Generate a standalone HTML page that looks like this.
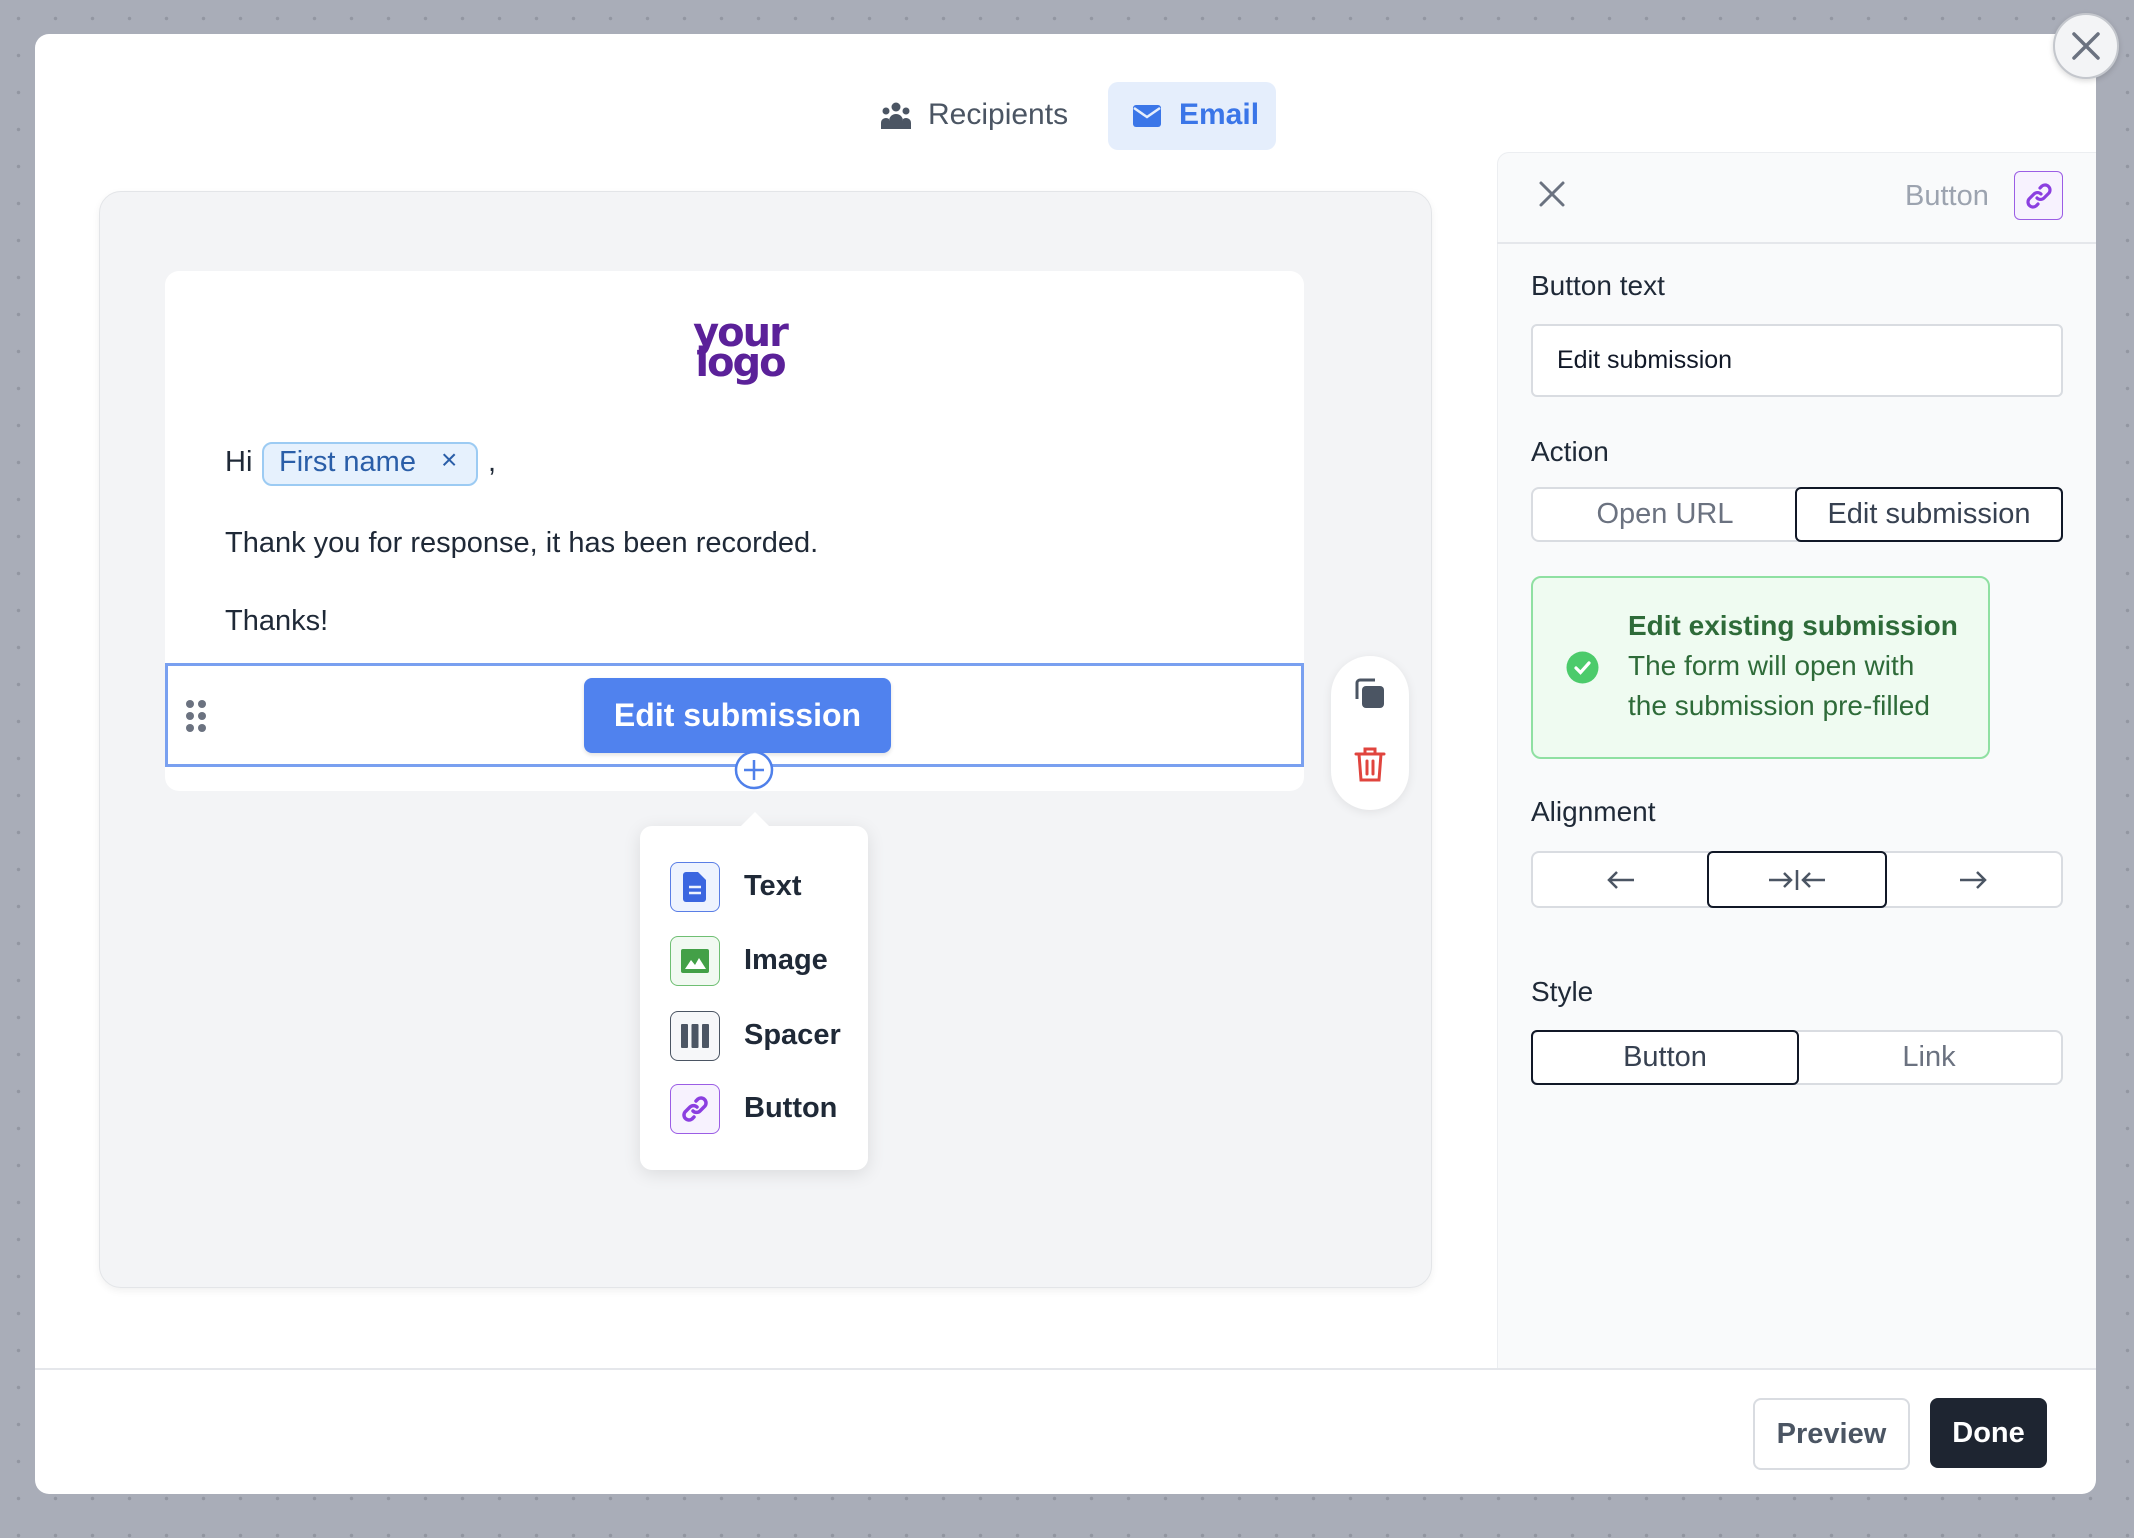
<!DOCTYPE html>
<html><head><meta charset="utf-8"><style>
*{box-sizing:border-box;margin:0;padding:0}
body{width:2134px;height:1538px;overflow:hidden;background:#a9adb8;background-image:radial-gradient(circle,#9296a1 1.5px,transparent 2px);background-size:37px 37px;font-family:"Liberation Sans",sans-serif;color:#1f2937;position:relative}
.a{position:absolute}
.modal{left:35px;top:34px;width:2061px;height:1460px;background:#fff;border-radius:14px}
.lbl{font-size:28px;color:#1f2937}
.seg{display:flex;border:2px solid #d9dce1;border-radius:8px;background:#fff;overflow:visible}
.seg div{flex:1;display:flex;align-items:center;justify-content:center;font-size:29px;color:#6b7280}
.seg .on{border:2.5px solid #111827;border-radius:6px;color:#374151;margin:-2px}
.mi{left:670px;width:50px;height:50px;border-radius:8px;border:1.5px solid;display:flex;align-items:center;justify-content:center}
.mt{left:744px;font-size:29px;font-weight:bold;color:#1f2937}
</style></head><body>
<div class="a modal"></div>
<div class="a" style="left:2053px;top:13px;width:66px;height:66px;border-radius:50%;background:#f3f4f6;border:2px solid #c4c7cd;box-shadow:0 2px 6px rgba(0,0,0,.15)"></div>
<svg class="a" style="left:2068px;top:28px" width="36" height="36" viewBox="0 0 36 36"><path d="M6 6L30 30M30 6L6 30" stroke="#6b7280" stroke-width="3.5" stroke-linecap="round"/></svg>

<svg class="a" style="left:880px;top:102px" width="32" height="28" viewBox="0 0 32 28"><circle cx="16" cy="5" r="4.5" fill="#4b5563"/><circle cx="6" cy="9" r="3.5" fill="#4b5563"/><circle cx="26" cy="9" r="3.5" fill="#4b5563"/><path d="M9 27v-8a7 7 0 0114 0v8z" fill="#4b5563"/><path d="M1 27v-6a5 5 0 018-4v10zM31 27v-6a5 5 0 00-8-4v10z" fill="#4b5563"/></svg>
<div class="a" style="left:928px;top:98px;font-size:30px;color:#4b5563">Recipients</div>
<div class="a" style="left:1108px;top:82px;width:168px;height:68px;background:#e5eefc;border-radius:10px"></div>
<svg class="a" style="left:1133px;top:105px" width="28" height="22" viewBox="0 0 28 22"><rect x="0" y="0" width="28" height="22" rx="3" fill="#3b76e8"/><path d="M1 3l13 9 13-9" stroke="#e5eefc" stroke-width="2.5" fill="none"/></svg>
<div class="a" style="left:1179px;top:98px;font-size:30px;font-weight:bold;color:#3b76e8">Email</div>

<div class="a" style="left:99px;top:191px;width:1333px;height:1097px;background:#f3f4f6;border:1.5px solid #e3e5e8;border-radius:22px;box-shadow:0 3px 8px rgba(0,0,0,.06)"></div>
<div class="a" style="left:165px;top:271px;width:1139px;height:520px;background:#fff;border-radius:14px"></div>
<div class="a" style="left:680px;top:318px;width:120px;text-align:center;font-weight:900;color:#5b2199;font-size:40px;line-height:30px;letter-spacing:-2px;font-family:'DejaVu Sans',sans-serif">your<br>logo</div>
<div class="a" style="left:225px;top:446px;font-size:29px">Hi</div>
<div class="a" style="left:262px;top:442px;width:216px;height:44px;background:#e6f1fd;border:2px solid #9ccbf3;border-radius:10px"></div>
<div class="a" style="left:279px;top:446px;font-size:29px;color:#2a5ea8">First name</div>
<div class="a" style="left:441px;top:444px;font-size:28px;color:#2a5ea8">×</div>
<div class="a" style="left:488px;top:446px;font-size:29px">,</div>
<div class="a" style="left:225px;top:527px;font-size:29px;color:#1f2937">Thank you for response, it has been recorded.</div>
<div class="a" style="left:225px;top:605px;font-size:29px;color:#1f2937">Thanks!</div>
<div class="a" style="left:165px;top:663px;width:1139px;height:104px;border:3px solid #79a0f0;background:#fff"></div>
<svg class="a" style="left:184px;top:699px" width="24" height="34" viewBox="0 0 24 34"><g fill="#6b7280"><circle cx="6" cy="5" r="4"/><circle cx="18" cy="5" r="4"/><circle cx="6" cy="17" r="4"/><circle cx="18" cy="17" r="4"/><circle cx="6" cy="29" r="4"/><circle cx="18" cy="29" r="4"/></g></svg>
<div class="a" style="left:584px;top:678px;width:307px;height:75px;background:#5082ee;border-radius:8px;color:#fff;font-size:32px;font-weight:bold;display:flex;align-items:center;justify-content:center;box-shadow:0 2px 4px rgba(0,0,0,.12)">Edit submission</div>
<svg class="a" style="left:733px;top:749px" width="42" height="42" viewBox="0 0 42 42"><circle cx="21" cy="21" r="18" fill="#fff" stroke="#4f80ea" stroke-width="2.5"/><path d="M21 11v20M11 21h20" stroke="#4f80ea" stroke-width="2.5"/></svg>
<div class="a" style="left:1331px;top:656px;width:78px;height:154px;background:#fff;border-radius:40px;box-shadow:0 2px 10px rgba(0,0,0,.08)"></div>
<svg class="a" style="left:1353px;top:677px" width="34" height="34" viewBox="0 0 34 34"><path d="M4 22V6a3 3 0 013-3h15" stroke="#4b5563" stroke-width="3" fill="none"/><rect x="9" y="9" width="22" height="22" rx="4" fill="#4b5563"/></svg>
<svg class="a" style="left:1353px;top:746px" width="34" height="38" viewBox="0 0 34 38"><g stroke="#e0443e" stroke-width="3" fill="none" stroke-linecap="round"><path d="M3 8h28M12 8V3h10v5M6 8l2 26h18l2-26M14 15v13M20 15v13"/></g></svg>

<div class="a" style="left:640px;top:826px;width:228px;height:344px;background:#fff;border-radius:12px;box-shadow:0 4px 18px rgba(0,0,0,.1)"></div>
<div class="a" style="left:740px;top:812px;width:0;height:0;border-left:15px solid transparent;border-right:15px solid transparent;border-bottom:15px solid #fff"></div>
<div class="a mi" style="top:862px;border-color:#5a7ee6;background:#eef3fe"><svg width="24" height="30" viewBox="0 0 24 30"><path d="M3 0h12l8 8v19a3 3 0 01-3 3H3a3 3 0 01-3-3V3a3 3 0 013-3z" fill="#3b66e0"/><path d="M6 15h12M6 21h12" stroke="#eef3fe" stroke-width="2.5"/></svg></div>
<div class="a mt" style="top:870px">Text</div>
<div class="a mi" style="top:936px;border-color:#6fbf73;background:#f1f9f1"><svg width="28" height="24" viewBox="0 0 28 24"><rect width="28" height="24" rx="2" fill="#43a047"/><path d="M4 20l6-9 4 5 4-7 7 11z" fill="#fff"/></svg></div>
<div class="a mt" style="top:944px">Image</div>
<div class="a mi" style="top:1011px;border-color:#4b5563;background:#f6f7f9"><svg width="28" height="24" viewBox="0 0 28 24"><g fill="#4b5563"><rect x="0" width="7" height="24" rx="1"/><rect x="10.5" width="7" height="24" rx="1"/><rect x="21" width="7" height="24" rx="1"/></g></svg></div>
<div class="a mt" style="top:1019px">Spacer</div>
<div class="a mi" style="top:1084px;border-color:#9b5de5;background:#f7f2fe"><svg width="28" height="28" viewBox="0 0 28 28"><g stroke="#8b3fe0" stroke-width="3.5" fill="none" stroke-linecap="round"><path d="M12 16a5 5 0 007 0l5-5a5 5 0 00-7-7l-2 2"/><path d="M16 12a5 5 0 00-7 0l-5 5a5 5 0 007 7l2-2"/></g></svg></div>
<div class="a mt" style="top:1092px">Button</div>

<div class="a" style="left:1497px;top:152px;width:599px;height:1216px;background:#f9fafb;border-left:1.5px solid #eceef1;border-top:1.5px solid #eceef1;border-top-left-radius:12px"></div>
<div class="a" style="left:1497px;top:242px;width:599px;height:2px;background:#e5e7eb"></div>
<svg class="a" style="left:1538px;top:180px" width="28" height="28" viewBox="0 0 28 28"><path d="M3 3l22 22M25 3L3 25" stroke="#6b7280" stroke-width="3" stroke-linecap="round"/></svg>
<div class="a" style="left:1905px;top:180px;font-size:29px;color:#9ca3af">Button</div>
<div class="a" style="left:2014px;top:171px;width:49px;height:49px;border:1.5px solid #9b5de5;border-radius:6px;background:#f7f2fe;display:flex;align-items:center;justify-content:center"><svg width="28" height="28" viewBox="0 0 28 28"><g stroke="#8b3fe0" stroke-width="3.2" fill="none" stroke-linecap="round"><path d="M12 16a5 5 0 007 0l5-5a5 5 0 00-7-7l-2 2"/><path d="M16 12a5 5 0 00-7 0l-5 5a5 5 0 007 7l2-2"/></g></svg></div>

<div class="a lbl" style="left:1531px;top:270px">Button text</div>
<div class="a" style="left:1531px;top:324px;width:532px;height:73px;background:#fff;border:2px solid #d9dce1;border-radius:6px;padding-left:24px;display:flex;align-items:center;font-size:25px;color:#111827">Edit submission</div>
<div class="a lbl" style="left:1531px;top:436px">Action</div>
<div class="a seg" style="left:1531px;top:487px;width:532px;height:55px"><div>Open URL</div><div class="on">Edit submission</div></div>
<div class="a" style="left:1531px;top:576px;width:459px;height:183px;background:#effbf1;border:2px solid #8fe0a2;border-radius:10px"></div>
<svg class="a" style="left:1566px;top:651px" width="33" height="33" viewBox="0 0 33 33"><circle cx="16.5" cy="16.5" r="16" fill="#4ccb6b"/><path d="M10 17l4.5 4.5L23 12" stroke="#fff" stroke-width="3.2" fill="none" stroke-linecap="round"/></svg>
<div class="a" style="left:1628px;top:606px;font-size:28px;line-height:40px;color:#2e6b39"><b>Edit existing submission</b><br>The form will open with<br>the submission pre-filled</div>
<div class="a lbl" style="left:1531px;top:796px">Alignment</div>
<div class="a seg" style="left:1531px;top:851px;width:532px;height:57px">
<div><svg width="30" height="20" viewBox="0 0 30 20"><path d="M28 10H3M11 2L3 10l8 8" stroke="#4b5563" stroke-width="2.5" fill="none"/></svg></div>
<div class="on"><svg width="60" height="24" viewBox="0 0 60 24"><g stroke="#4b5563" stroke-width="2.5" fill="none"><path d="M2 12h22M17 5l7 7-7 7M30 2v20M58 12H36M43 5l-7 7 7 7"/></g></svg></div>
<div><svg width="30" height="20" viewBox="0 0 30 20"><path d="M2 10h25M19 2l8 8-8 8" stroke="#4b5563" stroke-width="2.5" fill="none"/></svg></div>
</div>
<div class="a lbl" style="left:1531px;top:976px">Style</div>
<div class="a seg" style="left:1531px;top:1030px;width:532px;height:55px"><div class="on">Button</div><div>Link</div></div>

<div class="a" style="left:35px;top:1368px;width:2061px;height:2px;background:#e5e7eb"></div>
<div class="a" style="left:1753px;top:1398px;width:157px;height:72px;border:2px solid #d9dce1;border-radius:8px;background:#fff;display:flex;align-items:center;justify-content:center;font-size:29px;font-weight:bold;color:#4b5563">Preview</div>
<div class="a" style="left:1930px;top:1398px;width:117px;height:70px;border-radius:8px;background:#1e2531;display:flex;align-items:center;justify-content:center;font-size:29px;font-weight:bold;color:#fff">Done</div>
</body></html>
